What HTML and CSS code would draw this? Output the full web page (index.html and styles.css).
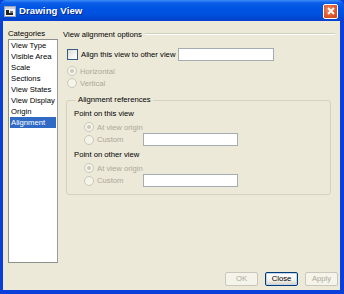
FILE: index.html
```html
<!DOCTYPE html>
<html>
<head>
<meta charset="utf-8">
<link rel="stylesheet" href="styles.css">
</head>
<body>
<div class="window">
  <div class="titlebar">
    <svg class="app-icon" width="12" height="11" viewBox="0 0 12 11">
      <rect x="0.5" y="0.5" width="11" height="10" fill="#f4f4f4" stroke="#9aa4b4"/>
      <rect x="1" y="1" width="10" height="2" fill="#c9d3e3"/>
      <rect x="2" y="4" width="3" height="3" fill="#222"/>
      <rect x="2" y="7" width="7" height="2" fill="#222"/>
      <rect x="6" y="5" width="3" height="2" fill="#777"/>
    </svg>
    <span class="title">Drawing View</span>
    <span class="close-btn">
      <svg width="8" height="8" viewBox="0 0 8 8"><path d="M1 1 L7 7 M7 1 L1 7" stroke="#fff" stroke-width="1.8"/></svg>
    </span>
  </div>
  <div class="client">
    <div class="main">
      <div class="cats">
        <div class="label">Categories</div>
        <ul class="list">
          <li>View Type</li>
          <li>Visible Area</li>
          <li>Scale</li>
          <li>Sections</li>
          <li>View States</li>
          <li>View Display</li>
          <li>Origin</li>
          <li class="selected">Alignment</li>
        </ul>
      </div>
      <div class="panel">
        <div class="sep-head"><span>View alignment options</span><i class="rule"></i></div>
        <div class="row check-row">
          <span class="checkbox"></span>
          <span class="text">Align this view to other view</span>
          <span class="textbox wide"></span>
        </div>
        <div class="row radio-row first">
          <span class="radio checked"></span><span class="text disabled">Horizontal</span>
        </div>
        <div class="row radio-row">
          <span class="radio"></span><span class="text disabled">Vertical</span>
        </div>
        <fieldset class="group">
          <legend>Alignment references</legend>
          <div class="sub-title">Point on this view</div>
          <div class="row sub-radio">
            <span class="radio checked"></span><span class="text disabled">At view origin</span>
          </div>
          <div class="row sub-radio custom">
            <span class="radio"></span><span class="text disabled custom-label">Custom</span>
            <span class="textbox"></span>
          </div>
          <div class="sub-title second">Point on other view</div>
          <div class="row sub-radio">
            <span class="radio checked"></span><span class="text disabled">At view origin</span>
          </div>
          <div class="row sub-radio custom">
            <span class="radio"></span><span class="text disabled custom-label">Custom</span>
            <span class="textbox"></span>
          </div>
        </fieldset>
      </div>
    </div>
    <div class="buttons">
      <span class="btn disabled">OK</span>
      <span class="btn default">Close</span>
      <span class="btn disabled">Apply</span>
    </div>
  </div>
</div>
</body>
</html>
```

FILE: styles.css
```css
html, body {
  margin: 0;
  padding: 0;
  background: #ffffff;
}

.window {
  width: 344px;
  height: 294px;
  display: flex;
  flex-direction: column;
  background: #0a3fd9;
  font-family: "Liberation Sans", Arial, sans-serif;
  font-size: 7.7px;
  color: #000;
}

.titlebar {
  height: 21px;
  flex: none;
  display: flex;
  align-items: center;
  padding: 0 0 0 4px;
  background: linear-gradient(to bottom, #3d8cf7 0px, #0a5ee8 3px, #0054e3 8px, #0051de 14px, #0047cf 18px, #0a3fd0 21px);
  border-radius: 6px 6px 0 0;
}

.app-icon {
  flex: none;
  margin-top: 1px;
}

.title {
  margin-left: 3px;
  color: #fff;
  font-weight: bold;
  font-size: 9.6px;
  letter-spacing: 0.1px;
  text-shadow: 1px 1px 0 #0a2a8a;
  flex: 1;
}

.close-btn {
  width: 13px;
  height: 13px;
  margin-right: 6px;
  margin-top: 1px;
  display: flex;
  align-items: center;
  justify-content: center;
  border: 1px solid #fff;
  border-radius: 2px;
  background: radial-gradient(circle at 40% 35%, #f08a64 0%, #e05a2c 55%, #c2421a 100%);
}

.close-btn svg {
  display: block;
}

.client {
  flex: 1;
  margin: 0 4px 4px 3px;
  background: #ece9d8;
  display: flex;
  flex-direction: column;
  padding: 7px 2px 4px 5px;
}

.main {
  display: flex;
  height: 235px;
  flex: none;
}

.cats {
  width: 50px;
  flex: none;
  display: flex;
  flex-direction: column;
}

.label {
  height: 11px;
  line-height: 11px;
}

.list {
  list-style: none;
  margin: 0;
  padding: 0 1px;
  flex: 1;
  background: #fff;
  border: 1px solid #8e8f8f;
  border-right-color: #9a9a9a;
}

.list li {
  height: 11px;
  line-height: 11px;
  padding-left: 1px;
}

.list li.selected {
  background: #316ac5;
  color: #fff;
}

.panel {
  margin-left: 5px;
  width: 273px;
  display: flex;
  flex-direction: column;
}

.sep-head {
  height: 12px;
  display: flex;
  align-items: center;
}

.sep-head .rule {
  flex: 1;
  margin-left: 3px;
  margin-right: 1px;
  height: 0;
  border-top: 1px solid #d0d0bf;
  border-bottom: 1px solid #fff;
}

.row {
  display: flex;
  align-items: center;
}

.check-row {
  margin-top: 8px;
  height: 13px;
  padding-left: 4px;
}

.checkbox {
  width: 9px;
  height: 9px;
  border: 1px solid #3b5a82;
  background: linear-gradient(135deg, #dcdcd7 0%, #f4f4f0 60%, #ffffff 100%);
  flex: none;
}

.text {
  margin-left: 3px;
  white-space: nowrap;
}

.disabled {
  color: #aca899;
}

.textbox {
  height: 11px;
  border: 1px solid #a5acb2;
  background: #fff;
  flex: none;
  width: 93px;
  margin-left: 16px;
}

.textbox.wide {
  width: 94px;
  margin-left: 3px;
}

.radio-row {
  height: 12px;
  padding-left: 4px;
}

.radio-row.first {
  margin-top: 4px;
}

.radio {
  width: 8px;
  height: 8px;
  border-radius: 50%;
  border: 1px solid #cac8bb;
  background: #f5f4ea;
  flex: none;
  position: relative;
}

.radio.checked::after {
  content: "";
  position: absolute;
  left: 2px;
  top: 2px;
  width: 4px;
  height: 4px;
  border-radius: 50%;
  background: #cac8bb;
}

.group {
  margin: 5px 5px 0 3px;
  padding: 0 0 7px 7px;
  border: 1px solid #d5d2c0;
  border-radius: 3px;
  min-width: 0;
}

.group legend {
  padding: 0 2px;
  margin-left: 2px;
  line-height: 12px;
  height: 12px;
}

.sub-title {
  height: 12px;
  line-height: 12px;
  margin-top: 2px;
}

.sub-title.second {
  margin-top: 3px;
}

.sub-radio {
  height: 12px;
  padding-left: 10px;
  margin-top: 1px;
}

.sub-radio.custom {
  height: 13px;
  margin-top: 0;
}

.custom-label {
  width: 30px;
}

.buttons {
  margin-top: 9px;
  display: flex;
  justify-content: flex-end;
  gap: 7px;
}

.btn {
  width: 31px;
  height: 12px;
  line-height: 12px;
  text-align: center;
  border: 1px solid #c9c7ba;
  border-radius: 2px;
  background: #f5f4ea;
}

.btn.default {
  border-color: #003c74;
  background: linear-gradient(to bottom, #ffffff 0%, #f3f2ec 60%, #d6d0c5 100%);
  box-shadow: inset 0 0 0 1px #c2d4f0;
  color: #000;
}
```
